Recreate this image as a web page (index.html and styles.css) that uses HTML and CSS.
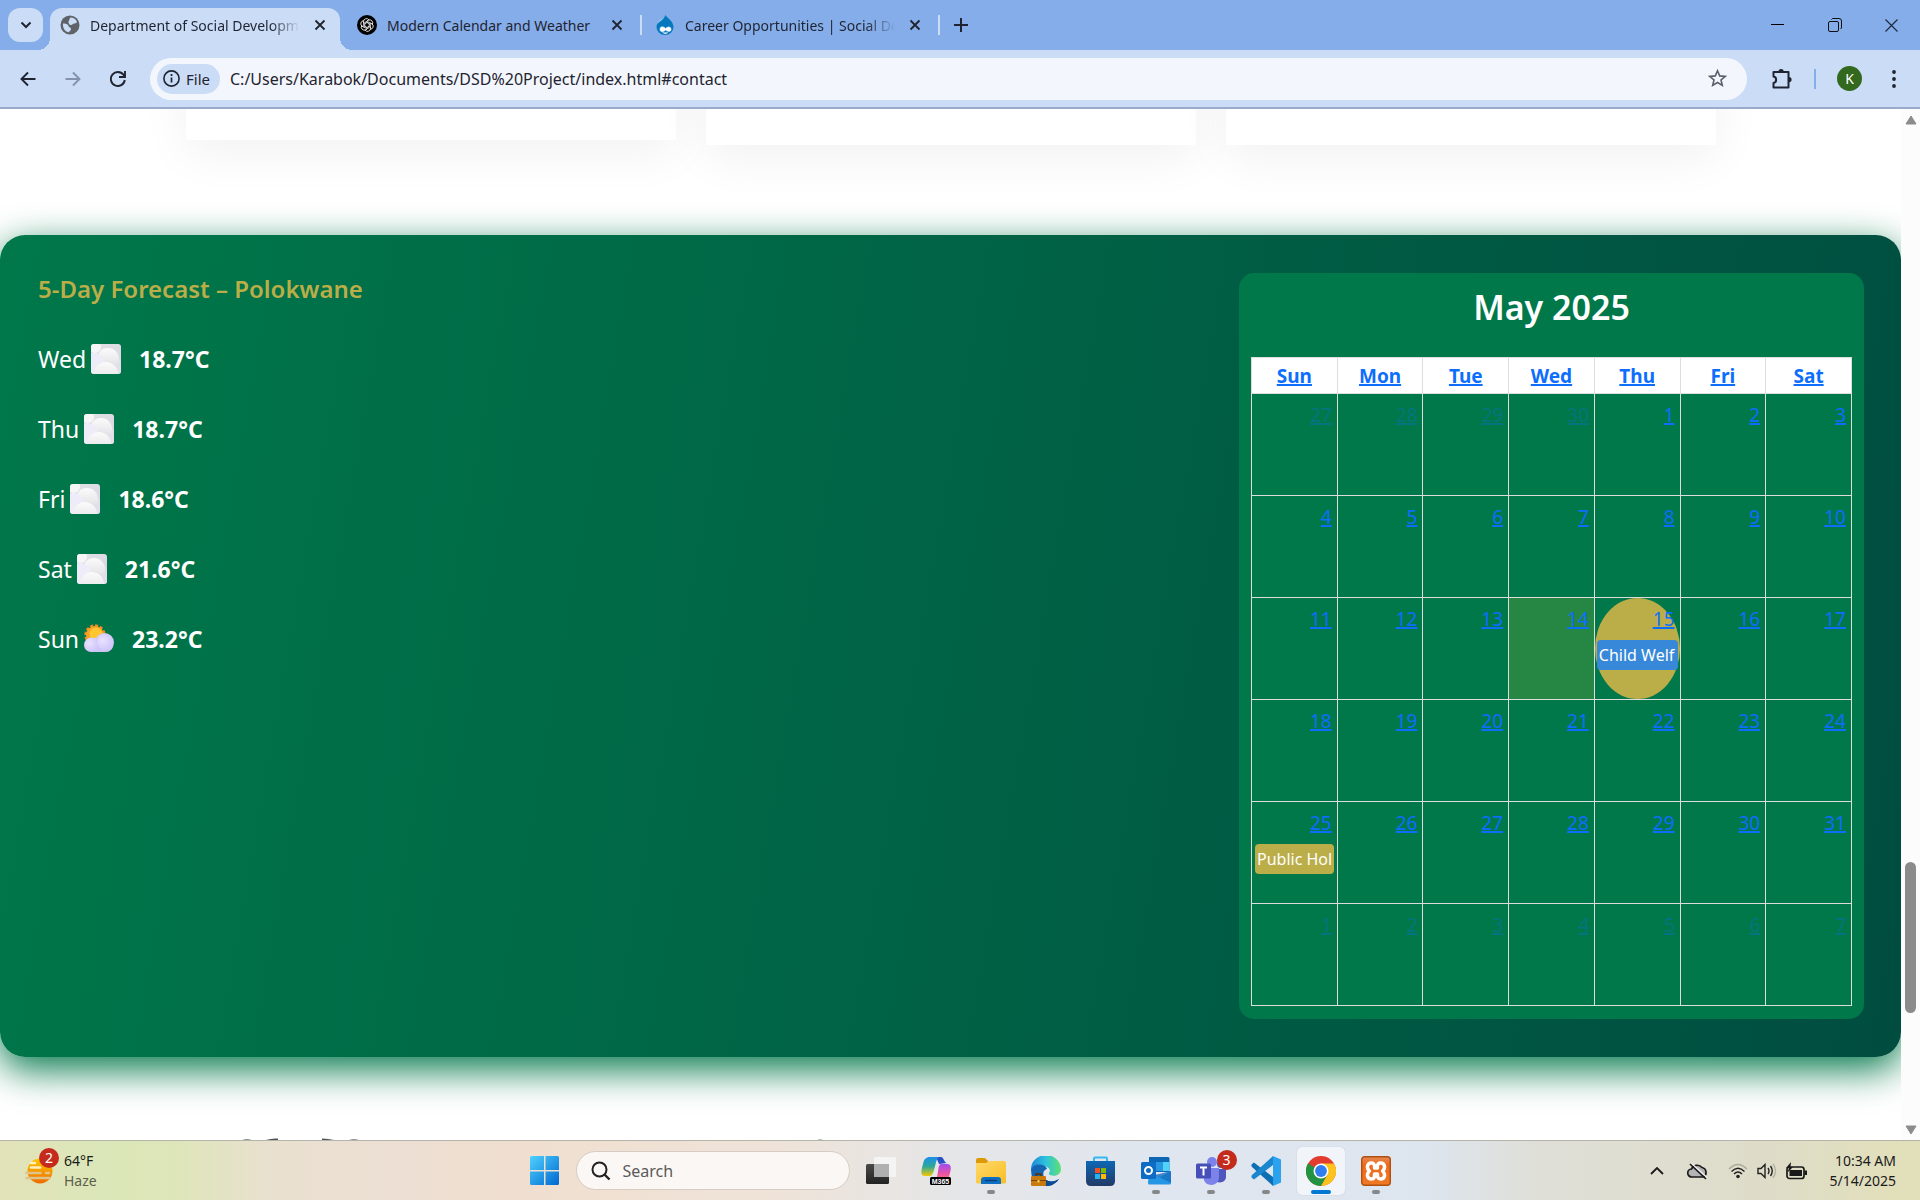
FILE: index.html
```html
<!DOCTYPE html>
<html lang="en">
<head>
<meta charset="utf-8">
<title>Department of Social Development</title>
<link rel="stylesheet" href="styles.css">
</head>
<body>
<svg class="defs" aria-hidden="true">
  <defs>
    <linearGradient id="cloudA" x1="0" y1="0" x2="0" y2="1"><stop offset="0" stop-color="#fbfbfb"/><stop offset=".6" stop-color="#e9e9ec"/><stop offset="1" stop-color="#d6d4de"/></linearGradient>
    <linearGradient id="cloudB" x1="0" y1="0" x2="1" y2="1"><stop offset="0" stop-color="#e2e2e4"/><stop offset="1" stop-color="#d8d4e4"/></linearGradient>
    <linearGradient id="lilac" x1="0" y1="0" x2="0" y2="1"><stop offset="0" stop-color="#d4c9fb"/><stop offset="1" stop-color="#cdc4f6"/></linearGradient>
    <radialGradient id="lilacLight" cx=".35" cy=".4" r=".6"><stop offset="0" stop-color="#e9e3ff"/><stop offset="1" stop-color="#d2c8fa"/></radialGradient>
    <linearGradient id="sun" x1="0" y1="0" x2="0" y2="1"><stop offset="0" stop-color="#ffc800"/><stop offset="1" stop-color="#ee6a00"/></linearGradient>
    <linearGradient id="win" x1="0" y1="0" x2="1" y2="1"><stop offset="0" stop-color="#4fd2ff"/><stop offset="1" stop-color="#0067d0"/></linearGradient>
    <linearGradient id="copL" x1="0" y1="0" x2="0" y2="1"><stop offset="0" stop-color="#1b8fe8"/><stop offset=".5" stop-color="#2fa89a"/><stop offset="1" stop-color="#f2c800"/></linearGradient>
    <linearGradient id="copR" x1="0" y1="0" x2="0" y2="1"><stop offset="0" stop-color="#a24bf0"/><stop offset=".6" stop-color="#f0569a"/><stop offset="1" stop-color="#ff8a50"/></linearGradient>
    <linearGradient id="folder" x1="0" y1="0" x2="1" y2="1"><stop offset="0" stop-color="#ffd96a"/><stop offset="1" stop-color="#f8bd25"/></linearGradient>
    <linearGradient id="edgeA" x1="0" y1="0" x2="1" y2="0"><stop offset="0" stop-color="#1b88d8"/><stop offset=".5" stop-color="#2fc3dc"/><stop offset="1" stop-color="#5fe070"/></linearGradient>
    <linearGradient id="store" x1="0" y1="0" x2="0" y2="1"><stop offset="0" stop-color="#0d67b4"/><stop offset="1" stop-color="#223a66"/></linearGradient>
    <linearGradient id="xampp" x1="0" y1="0" x2="0" y2="1"><stop offset="0" stop-color="#e58a55"/><stop offset=".3" stop-color="#ec6a1c"/><stop offset="1" stop-color="#f07a25"/></linearGradient>
    <linearGradient id="dark" x1="0" y1="0" x2="0" y2="1"><stop offset="0" stop-color="#4a4a4a"/><stop offset="1" stop-color="#222"/></linearGradient>
    <clipPath id="tile"><rect width="30" height="30" rx="3"/></clipPath>
    <symbol id="cloudy" viewBox="0 0 30 30">
      <g clip-path="url(#tile)"><rect width="30" height="30" fill="url(#cloudB)"/><circle cx="4" cy="3" r="6" fill="#f6f6f7"/><circle cx="27" cy="25" r="10" fill="#e2dfea"/><circle cx="17" cy="15" r="11" fill="url(#cloudA)"/><circle cx="3" cy="20" r="11" fill="#efecfa"/><circle cx="15" cy="30" r="12" fill="url(#cloudA)"/></g>
    </symbol>
    <symbol id="suncloud" viewBox="0 0 30 30">
      <circle cx="11" cy="11" r="9.400" fill="none" stroke="#f28a1c" stroke-width="2.500" stroke-dasharray="3 1.900"/><circle cx="11" cy="11" r="9" fill="#f9a12b"/><circle cx="12" cy="10" r="6.500" fill="#ffc62f"/>
      <circle cx="20.500" cy="18.500" r="9.500" fill="url(#lilac)"/><rect y="14" width="29" height="14" rx="7" fill="url(#lilac)"/><circle cx="7.500" cy="20.500" r="7" fill="url(#lilacLight)"/><circle cx="21" cy="18" r="8" fill="url(#lilacLight)"/>
    </symbol>
    <symbol id="x" viewBox="0 0 12 12"><path d="M1.500 1.500l9 9m0-9l-9 9" stroke="#1f2430" stroke-width="1.800"/></symbol>
  </defs>
</svg>

<header class="tabstrip">
  <button class="tab-search" aria-label="Search tabs"><svg width="12" height="8" viewBox="0 0 12 8"><path d="M1.500 1.500L6 6l4.500-4.500" fill="none" stroke="#1f2430" stroke-width="2"/></svg></button>
  <nav class="tabs">
    <div class="tab tab-active">
      <svg class="favicon" viewBox="0 0 20 20"><circle cx="10" cy="10" r="9.500" fill="#5f6368"/><path d="M10.500 2.500c3 0 5.500 1.500 6.500 4.500-1 2-3 1-4 2s-2.500 1.500-3.500.5S8 6.500 9 5.500s0-2 1.500-3zM3 8.500c2 0 5 .5 5.500 2.500s2.500 1 2.500 3-1.500 1.500-2 3.300C5.500 17 2.500 13.500 3 8.500z" fill="#cbdcf6"/></svg>
      <span class="tab-title faded">Department of Social Developm</span>
      <button class="tab-close" aria-label="Close tab"><svg width="12" height="12"><use href="#x"/></svg></button>
    </div>
    <div class="tab">
      <svg class="favicon" viewBox="0 0 20 20"><circle cx="10" cy="10" r="10" fill="#000"/><g fill="none" stroke="#fff" stroke-width=".8"><path id="petal" d="M6.500 8V6.500a3 3 0 0 1 5.600-1.400M7.800 11.200V7.500l3.400-2"/><use href="#petal" transform="rotate(60 10 10)"/><use href="#petal" transform="rotate(120 10 10)"/><use href="#petal" transform="rotate(180 10 10)"/><use href="#petal" transform="rotate(240 10 10)"/><use href="#petal" transform="rotate(300 10 10)"/></g></svg>
      <span class="tab-title">Modern Calendar and Weather</span>
      <button class="tab-close" aria-label="Close tab"><svg width="12" height="12"><use href="#x"/></svg></button>
    </div>
    <span class="tab-rule"></span>
    <div class="tab">
      <svg class="favicon" viewBox="0 0 20 20"><path d="M10.500 0C12 3 18.500 6 18.500 12A8.500 8 0 0 1 1.500 12C1.500 6 9 4 10.500 0z" fill="#0678be"/><path d="M10 1C8 4 3 5 2.500 9c2-3 6-4 7.500-8z" fill="#9bd0ee"/><path d="M5 14.500c0-4 4-3 5.500-1 2-2 5.500-2.500 5.500 1 0 3-4 2-5.500.5-1.500 2-5.500 2.500-5.500-.5zM7.500 17.500c2 1.500 4 1.500 5.500 0" fill="#fff" stroke="#fff" stroke-width=".5"/></svg>
      <span class="tab-title faded">Career Opportunities | Social De</span>
      <button class="tab-close" aria-label="Close tab"><svg width="12" height="12"><use href="#x"/></svg></button>
    </div>
    <span class="tab-rule"></span>
  </nav>
  <button class="new-tab" aria-label="New tab"><svg width="14" height="14" viewBox="0 0 14 14"><path d="M7 0v14M0 7h14" stroke="#1f2430" stroke-width="2"/></svg></button>
  <div class="window-controls">
    <button aria-label="Minimize"><svg width="13" height="14" viewBox="0 0 13 14"><path d="M0 6.500h13" stroke="#000"/></svg></button>
    <button aria-label="Restore"><svg width="14" height="14" viewBox="0 0 14 14"><g fill="none" stroke="#111"><rect x=".5" y="3.500" width="10" height="10" rx="1.500"/><path d="M3.500 1.500l1-1H11a2.500 2.500 0 0 1 2.500 2.500v7l-1 1"/></g></svg></button>
    <button aria-label="Close"><svg width="13" height="13" viewBox="0 0 13 13"><path d="M.5.5l12 12m0-12l-12 12" stroke="#1f2a40" stroke-width="1.200"/></svg></button>
  </div>
</header>

<div class="toolbar">
  <div class="nav-buttons">
    <button aria-label="Back"><svg width="16" height="16" viewBox="0 0 16 16"><path d="M15.500 8H1.500M8 1.500L1.500 8 8 14.500" fill="none" stroke="#1f2430" stroke-width="1.900"/></svg></button>
    <button aria-label="Forward"><svg width="16" height="16" viewBox="0 0 16 16"><path d="M.5 8h14M8 1.500L14.500 8 8 14.500" fill="none" stroke="#8492ac" stroke-width="1.900"/></svg></button>
    <button aria-label="Reload"><svg width="16" height="16" viewBox="0 0 16 16"><path d="M14.800 9A7 7 0 1 1 13.500 3.800L14.500 5.500M15 0v6H9" fill="none" stroke="#1f2430" stroke-width="1.900"/></svg></button>
  </div>
  <div class="omnibox">
    <button class="file-chip"><svg width="17" height="17" viewBox="0 0 17 17"><circle cx="8.500" cy="8.500" r="7.600" fill="none" stroke="#1f2430" stroke-width="1.600"/><path d="M8.500 7.500v5M8.500 4v2" stroke="#1f2430" stroke-width="1.700"/></svg>File</button>
    <input class="url" type="text" aria-label="Address" value="C:/Users/Karabok/Documents/DSD%20Project/index.html#contact">
    <button class="star" aria-label="Bookmark"><svg width="19" height="19" viewBox="0 0 19 19"><path d="M9.500 1.800l2.200 5.100 5.500.5-4.200 3.600 1.300 5.400-4.800-2.900-4.800 2.900L6 11 1.800 7.400l5.500-.5z" fill="none" stroke="#5a6068" stroke-width="1.600"/></svg></button>
  </div>
  <div class="tool-icons">
    <button aria-label="Extensions"><svg width="22" height="22" viewBox="0 0 22 22"><path d="M2.500 4h15v15.500h-15V15c3.500-.5 3.500-6 0-6.500z" fill="none" stroke="#1f2430" stroke-width="2" stroke-linejoin="round"/><path d="M7.500 3.500a2.600 2.600 0 0 1 5.200 0zM18 9a2.600 2.600 0 0 1 0 5.200z" fill="#1f2430"/></svg></button>
    <span class="tool-rule"></span>
    <button class="avatar" aria-label="Profile">K</button>
    <button aria-label="Menu"><svg width="4" height="18" viewBox="0 0 4 18"><g fill="#1f2430"><circle cx="2" cy="2" r="1.900"/><circle cx="2" cy="9" r="1.900"/><circle cx="2" cy="16" r="1.900"/></g></svg></button>
  </div>
</div>

<div class="viewport">
  <main class="page">
    <div class="cards"><div class="card card-short"></div><div class="card"></div><div class="card"></div></div>
    <section class="panel">
      <div class="forecast">
        <h2>5-Day Forecast – Polokwane</h2>
        <ul>
          <li>Wed <svg class="wx"><use href="#cloudy"/></svg><strong>18.7°C</strong></li>
          <li>Thu <svg class="wx"><use href="#cloudy"/></svg><strong>18.7°C</strong></li>
          <li>Fri <svg class="wx"><use href="#cloudy"/></svg><strong>18.6°C</strong></li>
          <li>Sat <svg class="wx"><use href="#cloudy"/></svg><strong>21.6°C</strong></li>
          <li>Sun <svg class="wx"><use href="#suncloud"/></svg><strong>23.2°C</strong></li>
        </ul>
      </div>
      <div class="calendar">
        <h2>May 2025</h2>
        <table>
          <thead><tr><th><a href="#">Sun</a></th><th><a href="#">Mon</a></th><th><a href="#">Tue</a></th><th><a href="#">Wed</a></th><th><a href="#">Thu</a></th><th><a href="#">Fri</a></th><th><a href="#">Sat</a></th></tr></thead>
          <tbody>
            <tr><td class="other"><a href="#">27</a></td><td class="other"><a href="#">28</a></td><td class="other"><a href="#">29</a></td><td class="other"><a href="#">30</a></td><td><a href="#">1</a></td><td><a href="#">2</a></td><td><a href="#">3</a></td></tr>
            <tr><td><a href="#">4</a></td><td><a href="#">5</a></td><td><a href="#">6</a></td><td><a href="#">7</a></td><td><a href="#">8</a></td><td><a href="#">9</a></td><td><a href="#">10</a></td></tr>
            <tr><td><a href="#">11</a></td><td><a href="#">12</a></td><td><a href="#">13</a></td><td class="today"><a href="#">14</a></td><td><div class="oval"><a href="#">15</a><div class="event event-blue">Child Welf</div></div></td><td><a href="#">16</a></td><td><a href="#">17</a></td></tr>
            <tr><td><a href="#">18</a></td><td><a href="#">19</a></td><td><a href="#">20</a></td><td><a href="#">21</a></td><td><a href="#">22</a></td><td><a href="#">23</a></td><td><a href="#">24</a></td></tr>
            <tr><td><a href="#">25</a><div class="event">Public Hol</div></td><td><a href="#">26</a></td><td><a href="#">27</a></td><td><a href="#">28</a></td><td><a href="#">29</a></td><td><a href="#">30</a></td><td><a href="#">31</a></td></tr>
            <tr><td class="other"><a href="#">1</a></td><td class="other"><a href="#">2</a></td><td class="other"><a href="#">3</a></td><td class="other"><a href="#">4</a></td><td class="other"><a href="#">5</a></td><td class="other"><a href="#">6</a></td><td class="other"><a href="#">7</a></td></tr>
          </tbody>
        </table>
      </div>
    </section>
    <footer class="crest">
      <svg width="600" height="40" viewBox="0 0 600 40"><g fill="none" stroke="#8b908e" stroke-width="1.500"><path d="M0 3.500q6-3.500 12 0M107 3.500q6-3.500 12 0" /><path d="M25 3q6-2 12-1.500M81 1.500q6 0 12 1.500" stroke="#4d5452" stroke-width="2"/></g><path d="M577 1q5 0 6 2h-4z" fill="#9db09f"/></svg>
    </footer>
  </main>
  <div class="scrollbar">
    <svg width="12" height="10" viewBox="0 0 12 10"><path d="M6 1l5 8H1z" fill="#8b8b8b" stroke="#8b8b8b" stroke-linejoin="round"/></svg>
    <div class="track"><div class="thumb"></div></div>
    <svg width="12" height="10" viewBox="0 0 12 10"><path d="M6 9l5-8H1z" fill="#8b8b8b" stroke="#8b8b8b" stroke-linejoin="round"/></svg>
  </div>
</div>

<footer class="taskbar">
  <button class="weather">
    <span class="weather-icon"><svg width="28" height="26" viewBox="0 0 28 26"><circle cx="15" cy="13" r="12.500" fill="url(#sun)"/><g stroke-linecap="round" stroke-width="2.600"><path d="M6 5h4M6 9.500h9" stroke="#fff0c0"/><path d="M1.500 15h14M21 15h3M1.500 20h23" stroke="#dcc48c"/></g></svg><span class="badge">2</span></span>
    <span class="weather-text"><span>64°F</span><span class="muted">Haze</span></span>
  </button>
  <div class="apps">
    <button class="app" aria-label="Start"><svg width="30" height="30" viewBox="0 0 30 30"><path d="M0 1.500A1.500 1.500 0 0 1 1.500 0H14v14H0zM15.500 0h12A1.500 1.500 0 0 1 29 1.500V14H15.500zM0 15.500h14V29H1.500A1.500 1.500 0 0 1 0 27.500zM15.500 15.500H29v12a1.500 1.500 0 0 1-1.500 1.500h-12z" fill="url(#win)"/></svg></button>
    <label class="search"><svg width="20" height="20" viewBox="0 0 20 20"><circle cx="8.500" cy="8.500" r="7" fill="none" stroke="#222" stroke-width="2"/><path d="M13.500 13.500l5 5" stroke="#222" stroke-width="2.400"/></svg><input type="search" placeholder="Search" aria-label="Search"></label>
    <button class="app" aria-label="Task view"><svg width="30" height="30" viewBox="0 0 30 30"><rect y="8" width="23" height="20" rx="1.500" fill="url(#dark)"/><rect x="8" y="1" width="22" height="20" rx="1.500" fill="#f4f4f4"/><rect x="8" y="8" width="15" height="13" fill="#b0b0b0"/></svg></button>
    <button class="app" aria-label="Microsoft 365 Copilot"><svg width="30" height="30" viewBox="0 0 30 30"><path d="M15 1h5c3 0 3 6 6 6l-8 1z" fill="#2850c8"/><path d="M9 1h9c-4 1-4 19-9 19H4c-5 0-4-5-2-12C3 3 5 1 9 1z" fill="url(#copL)"/><path d="M20 8h6c5 0 4 5 3 9-2 7-3 9-7 9h-9c5-2 3-18 7-18z" fill="url(#copR)"/><rect x="9" y="21" width="21" height="8" rx="1.500" fill="#000"/><text x="19.500" y="28" font-family="Liberation Sans" font-weight="700" font-size="7" text-anchor="middle" fill="#fff">M365</text></svg></button>
    <button class="app running" aria-label="File Explorer"><svg width="30" height="30" viewBox="0 0 30 30"><path d="M0 4q0-2 2-2h7l3 3v5H0z" fill="#dd9a08"/><path d="M0 7h10l3-2h15q2 0 2 2v19q0 1.500-1.500 1.500h-27Q0 27.500 0 26z" fill="url(#folder)"/><path d="M5 28v-4q0-3 3-3h14q3 0 3 3v4z" fill="#0e6fc4"/><path d="M9 24.500h12" stroke="#0a3f77" stroke-width="1.500"/></svg></button>
    <button class="app" aria-label="Edge"><svg width="30" height="30" viewBox="0 0 30 30"><path d="M0 14A15 14.500 0 0 1 30 13c0 6-6 8-11 6-2-1-1-2 0-4 0-4-6-6-11-4-4 1-7 2-8 3z" fill="url(#edgeA)"/><path d="M0 14c2-7 14-7 16-1-5 1-6 10 1 12 4 1 8 0 11-2-6 9-21 9-26 0q-2-4-2-9z" fill="#1466b4"/><path d="M12 16c-1 6 4 11 12 9l4-2c-3 5-9 8-14 7z" fill="#0d4a94"/><rect y="20" width="15" height="10" rx="1" fill="#c87a0c"/><path d="M0 24.500h15" stroke="#7d4300"/><path d="M5 20v-2h5v2" fill="none" stroke="#5b3300" stroke-width="1.500"/><rect x="6.500" y="24" width="2" height="2.500" fill="#ffd257"/></svg></button>
    <button class="app" aria-label="Store"><svg width="30" height="30" viewBox="0 0 30 30"><path d="M8 6V2.500q0-1 1-1h11q1 0 1 1V6" fill="none" stroke="#35b8f0" stroke-width="2"/><path d="M0 5h29v20q0 5-5 5H5q-5 0-5-5z" fill="url(#store)"/><path d="M9 12h5v5H9z" fill="#f25022"/><path d="M15 12h5v5h-5z" fill="#7fba00"/><path d="M9 18h5v5H9z" fill="#2bb1f0"/><path d="M15 18h5v5h-5z" fill="#ffb900"/></svg></button>
    <button class="app running" aria-label="Outlook"><svg width="30" height="30" viewBox="0 0 30 30"><path d="M8 1h19q1.500 0 1.500 1.500V16H8z" fill="#0c66b4"/><path d="M15 6h7v9h-7z" fill="#2a98e0"/><path d="M22 6h6.500v9H22z" fill="#4fd4f8"/><path d="M8 15l11 6 11-6v12q0 1.500-1.500 1.500h-20q-1.500 0-1.500-1.500z" fill="#2596e4"/><path d="M30 15v12L14 19z" fill="#166fc0" opacity=".8"/><rect y="6" width="15" height="17" rx="1.500" fill="#0f6cc4"/><circle cx="7.500" cy="14.500" r="3.500" fill="none" stroke="#fff" stroke-width="2"/></svg></button>
    <button class="app running" aria-label="Teams"><svg width="30" height="30" viewBox="0 0 30 30"><circle cx="25" cy="8" r="4" fill="#4e56bb"/><path d="M19 13h11v8c0 6-9 7-11 3z" fill="#4e56bb"/><circle cx="16" cy="6" r="5" fill="#7b83eb"/><path d="M8 12h15v9c0 10-13 10-15 3z" fill="#7b83eb"/><rect y="7.500" width="15" height="15" rx="1.500" fill="#464eb8"/><path d="M4 11.500h7M7.500 11.500v8" stroke="#fff" stroke-width="2"/></svg><span class="badge">3</span></button>
    <button class="app running" aria-label="Visual Studio Code"><svg width="30" height="30" viewBox="0 0 30 30"><path d="M1 8l2-1.500L22 21v9L1 11q-1.200-1.500 0-3z" fill="#0f6fb4"/><path d="M1 22l2 1.500L22 9V0L1 19q-1.200 1.500 0 3z" fill="#1a86ce"/><path d="M22 0l8 3.500v23L22 30z" fill="#2ba2ee"/></svg></button>
    <button class="app running active" aria-label="Chrome"><svg width="30" height="30" viewBox="0 0 30 30"><circle cx="15" cy="15" r="15" fill="#e33b2e"/><path d="M2 7.500A15 15 0 0 0 15 30l6.500-11.300L15 15z" fill="#229342"/><path d="M28 7.500A15 15 0 0 1 15 30l6.500-11.300L15 7.500z" fill="#fcc31e"/><circle cx="15" cy="15" r="7.500" fill="#fff"/><circle cx="15" cy="15" r="5.900" fill="#2f7def"/></svg></button>
    <button class="app running" aria-label="XAMPP"><svg width="30" height="30" viewBox="0 0 30 30"><rect x=".7" y=".7" width="28.600" height="28.600" rx="3" fill="url(#xampp)" stroke="#b04f10" stroke-width="1.400"/><path d="M6.500 10c1-4 7-4 7 0v2h3v-2c0-4 6-4 7 0q.5 3-2 5 2.500 2 2 5c-1 4-7 4-7 0v-2h-3v2c0 4-6 4-7 0q-.5-3 2-5-2.500-2-2-5z" fill="none" stroke="#fff" stroke-width="3.400" stroke-linejoin="round"/></svg></button>
  </div>
  <div class="tray">
    <button class="chevron" aria-label="Hidden icons"><svg width="14" height="8" viewBox="0 0 14 8"><path d="M1 7l6-6 6 6" fill="none" stroke="#1a1a1a" stroke-width="1.800"/></svg></button>
    <button aria-label="OneDrive"><svg width="21" height="18" viewBox="0 0 21 18"><path d="M5 15a4 4 0 0 1-.5-8A6 5.500 0 0 1 15 5.500a5 5 0 0 1 1 9.500z" fill="#b4b4b4" stroke="#1a1a1a" stroke-width="1.700"/><path d="M4.500 1.500l15 13.500" stroke="#f4f4f4" stroke-width="1.500"/><path d="M3 2l16 15" stroke="#1a1a1a" stroke-width="1.700"/></svg></button>
    <div class="status">
      <svg width="20" height="16" viewBox="0 0 20 16"><g fill="none" stroke-width="1.400"><path d="M1 6q9-9 18 0" stroke="#aaa99a"/><path d="M3.500 8.500q6.500-6.500 13 0M6 11q4-4 8 0" stroke="#222"/></g><circle cx="10" cy="13.500" r="1.800" fill="#222"/></svg>
      <svg width="20" height="16" viewBox="0 0 20 16"><g fill="none" stroke="#222" stroke-width="1.400"><path d="M1 5.500h3L8 1.500v13l-4-4H1zM11 5q2 3 0 6M13.500 3q3.500 5 0 10"/><path d="M16 1q5 7 0 14" stroke="#b5b4a4"/></g></svg>
      <svg width="21" height="18" viewBox="0 0 21 18"><rect x="1" y="5" width="17" height="11.500" rx="2.500" fill="none" stroke="#1a1a1a" stroke-width="1.700"/><path d="M3.500 8h12.500v6H3.500zM18.500 8.500H21v4.500h-2.500z" fill="#1a1a1a"/><path d="M5 0L0 6h3L1.500 10.500 7 5H4.500z" fill="#1a1a1a"/></svg>
    </div>
    <button class="clock"><span>10:34 AM</span><span>5/14/2025</span></button>
  </div>
</footer>
</body>
</html>
```
FILE: styles.css
```css
* { box-sizing: border-box; }

body {
  margin: 0;
  height: 100vh;
  display: flex;
  flex-direction: column;
  overflow: hidden;
  background: #fff;
  font-family: "Noto Sans", "Open Sans", sans-serif;
  color: #1f2430;
}

button {
  border: 0;
  padding: 0;
  background: none;
  font: inherit;
  color: inherit;
  display: flex;
  align-items: center;
  justify-content: center;
}

input { border: 0; padding: 0; background: none; font: inherit; color: inherit; outline: 0; min-width: 0; }
svg { display: block; flex: none; }
.defs { position: absolute; width: 0; height: 0; }

/* Tab strip */
.tabstrip { display: flex; align-items: center; height: 50px; padding-left: 8px; background: #85adea; flex: none; }
.tab-search { width: 35px; height: 34px; border-radius: 12px; background: #cbdcf6; margin-right: 7px; }
.tabs { display: flex; align-items: center; align-self: stretch; }
.tab { position: relative; display: flex; align-items: center; width: 290px; padding: 0 14px 0 10px; font-size: 14px; height: 34px; }
.tab-active { align-self: flex-end; height: 42px; padding: 0 14px 8px 10px; border-radius: 12px 12px 0 0; background: #cbdcf6; }
.tab-active::before, .tab-active::after { content: ""; position: absolute; bottom: 0; width: 12px; height: 12px; }
.tab-active::before { right: 100%; background: radial-gradient(circle at 0 0, transparent 12px, #cbdcf6 12px); }
.tab-active::after { left: 100%; background: radial-gradient(circle at 100% 0, transparent 12px, #cbdcf6 12px); }
.favicon { width: 20px; height: 20px; margin-right: 10px; }
.tab:not(.tab-active) { padding: 0 17px; width: 300px; }
.tab-rule + .tab:not(.tab-active) { padding-left: 13px; width: 296px; }
.tab-title { flex: 1; overflow: hidden; white-space: nowrap; }
.faded { -webkit-mask-image: linear-gradient(to right, #000 86%, transparent 100%); mask-image: linear-gradient(to right, #000 86%, transparent 100%); }
.tab-close { margin-left: 14px; }
.tab-rule { width: 2px; height: 20px; background: #cbdcf6; }
.new-tab { margin-left: 14px; }
.window-controls { display: flex; margin-left: auto; }
.window-controls button { width: 57px; height: 48px; }

/* Toolbar */
.toolbar { display: flex; align-items: center; height: 59px; flex: none; background: #cbdcf6; border-bottom: 2px solid #9aaacc; }
.nav-buttons { display: flex; padding-left: 5px; width: 150px; }
.nav-buttons button { width: 45px; height: 42px; }
.omnibox { flex: 1; display: flex; align-items: center; height: 42px; border-radius: 21px; background: #f3f7fd; padding: 0 20px 0 7px; }
.file-chip { height: 30px; padding: 0 10px 0 6px; gap: 6px; border-radius: 15px; background: #cbdcf6; font-size: 15px; margin-right: 10px; }
.url { flex: 1; font-size: 16px; }
.tool-icons { display: flex; align-items: center; width: 173px; padding-left: 24px; gap: 21px; }
.tool-rule { width: 2px; height: 20px; background: #85adea; }
.avatar { width: 25px; height: 25px; border-radius: 50%; background: #33691e; color: #fff; font-size: 14px; }
.tool-icons button:last-child { margin-left: 9px; }

/* Page */
.viewport { flex: 1; min-height: 0; display: flex; }
.page { flex: 1; min-width: 0; overflow: hidden; }
.cards { display: grid; grid-template-columns: repeat(3, 1fr); gap: 30px; width: 1530px; max-width: 90%; margin: -60px auto 90px; align-items: start; }
.card { height: 96px; background: #fff; box-shadow: 0 12px 50px rgba(0, 0, 0, .06); }
.card-short { height: 91px; }

.panel { display: flex; justify-content: space-between; align-items: flex-start; padding: 38px 37px 38px 38px; border-radius: 25px; background: linear-gradient(100deg, #00784a, #004d40); box-shadow: 0 12px 38px #007749; color: #fff; }
.panel h2 { margin: 0; font-weight: 600; }
.forecast h2 { font-size: 24px; line-height: 32px; color: #bbad47; }
.forecast ul { list-style: none; margin: 0; padding: 19px 0 0; }
.forecast li { display: flex; align-items: center; height: 70px; font-size: 23px; gap: 5px; }
.wx { width: 30px; height: 30px; margin-right: 13px; }

.calendar { flex: none; width: 625px; padding: 12px 12px 13px; border-radius: 15px; background: #00784a; }
.calendar h2 { font-size: 34px; line-height: 44px; text-align: center; padding-bottom: 28px; }
.calendar table { width: 100%; border-collapse: collapse; table-layout: fixed; font-size: 19px; }
.calendar a { color: #0d6efd; text-decoration: underline; text-decoration-thickness: 2px; text-decoration-skip-ink: none; }
.calendar th, .calendar td { border: 1px solid #ddd; padding: 0; }
.calendar th { height: 36px; background: #fff; font-weight: 700; font-size: 19px; line-height: 24px; }
.calendar td { height: 102px; vertical-align: top; text-align: right; line-height: 26px; }
.calendar td > a, .oval > a { display: block; padding: 8px 5px; }
.calendar td.other a { opacity: .3; }
.calendar .today { background: #268745; }
.oval { height: 101px; border-radius: 50%; background: #bbad47; }
.event { margin: 0 3px; height: 30px; padding: 0 2px; border-radius: 4px; background: #bbad47; font-size: 16px; line-height: 30px; text-align: left; white-space: nowrap; overflow: hidden; }
.event-blue { background: #3788d8; margin: 0 2px; }
.crest { padding: 81px 0 0 241px; }

.scrollbar { width: 19px; display: flex; flex-direction: column; align-items: center; padding: 6px 0 5px; background: #fcfcfc; }
.track { flex: 1; display: flex; flex-direction: column; justify-content: flex-end; padding-bottom: 112px; }
.thumb { width: 11px; height: 17%; border-radius: 6px; background: #8b8b8b; }

/* Taskbar */
.taskbar { height: 60px; flex: none; display: grid; grid-template-columns: 1fr auto 1fr; align-items: center; border-top: 1px solid #b4b4aa; background: linear-gradient(90deg, #e3e2b8 0, #dbe7b8 5%, #dde6b8 9%, #e9e0cf 14%, #ecdfd3 20%, #f0dfd0 27%, #efe3d8 40%, #e5e6e8 50%, #dfe6f0 62%, #dde5ef 74%, #dfdfd8 80%, #dedcc8 92%, #e2e0b8 100%); color: #1a1a1a; }
.weather { justify-self: start; padding-left: 25px; gap: 11px; font-size: 14px; line-height: 20px; text-align: left; }
.weather-icon { position: relative; }
.weather-text { display: flex; flex-direction: column; }
.muted { color: #5d604e; }
.badge { position: absolute; top: -10px; right: -6px; width: 20px; height: 20px; border-radius: 50%; background: #c42b1c; color: #fff; font-size: 14px; line-height: 20px; text-align: center; }
.apps { display: flex; align-items: center; gap: 7px; }
.app { position: relative; width: 48px; height: 48px; border-radius: 5px; }
.app .badge { top: 3px; right: -2px; }
.running::after { content: ""; position: absolute; bottom: 1px; left: 20px; width: 8px; height: 4px; border-radius: 2px; background: #858789; }
.active { background: #f1f4f9; box-shadow: 0 0 1px #b0b8c4; }
.running.active::after { left: 14px; width: 20px; background: #0078d4; }
.search { display: flex; align-items: center; gap: 12px; width: 274px; height: 39px; border-radius: 20px; border: 1px solid #d6ccc4; background: #faf7f4; padding-left: 14px; font-size: 16px; color: #5a5a5a; }
.search input { flex: 1; }
.search input::placeholder { color: #5a5a5a; opacity: 1; }
.tray { justify-self: end; display: flex; align-items: center; padding-right: 24px; }
.chevron { margin-right: 23px; }
.status { display: flex; align-items: center; gap: 9px; margin: 0 23px 0 20px; }
.clock { flex-direction: column; align-items: flex-end; font-size: 14px; line-height: 20px; }
```
